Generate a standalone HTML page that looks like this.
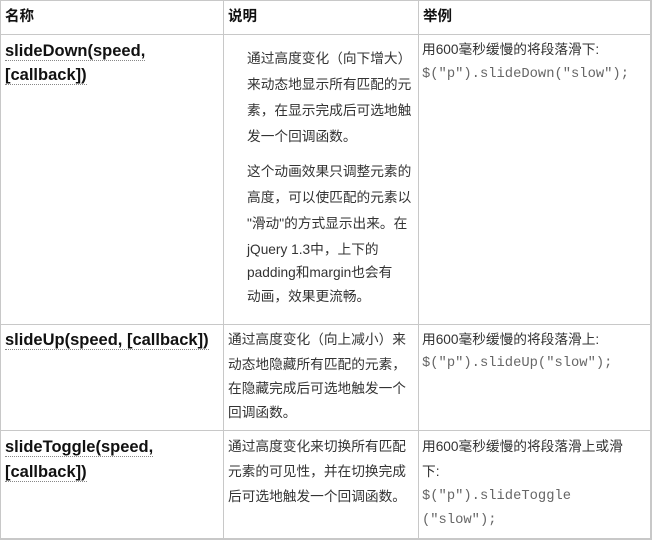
<!DOCTYPE html>
<html><head><meta charset="utf-8"><style>
body{margin:0;width:652px;height:540px;background:#fff;position:relative;overflow:hidden;font-family:"Liberation Sans","Noto Sans CJK SC",sans-serif;color:#333}
.h{position:absolute;background:#c8c8c8}
.t{position:absolute;white-space:nowrap;line-height:20px;font-size:13.7px}
.b{font-weight:bold;font-size:16.5px;color:#111}
.b span{border-bottom:1px dotted #888}
.c{font-family:"Liberation Mono",monospace;font-size:13.8px;color:#666}
.hd{font-weight:bold;font-size:14.5px;color:#111}
</style></head><body>
<div class="h" style="left:0;top:0;width:652px;height:1px"></div>
<div class="h" style="left:0;top:34px;width:652px;height:1px"></div>
<div class="h" style="left:0;top:324px;width:652px;height:1px"></div>
<div class="h" style="left:0;top:430px;width:652px;height:1px"></div>
<div class="h" style="left:0;top:538px;width:652px;height:2px"></div>
<div class="h" style="left:0;top:0;width:1px;height:540px"></div>
<div class="h" style="left:223px;top:0;width:1px;height:540px"></div>
<div class="h" style="left:418px;top:0;width:1px;height:540px"></div>
<div class="h" style="left:650px;top:0;width:2px;height:540px"></div>

<div class="t hd" style="left:5px;top:7px">名称</div>
<div class="t hd" style="left:228px;top:7px">说明</div>
<div class="t hd" style="left:423px;top:7px">举例</div>

<div class="t b" style="left:5px;top:41px"><span>slideDown(speed,</span></div>
<div class="t b" style="left:5px;top:65px"><span>[callback])</span></div>

<div class="t" style="left:247px;top:49px">通过高度变化（向下增大）</div>
<div class="t" style="left:247px;top:75px">来动态地显示所有匹配的元</div>
<div class="t" style="left:247px;top:101px">素，在显示完成后可选地触</div>
<div class="t" style="left:247px;top:127px">发一个回调函数。</div>
<div class="t" style="left:247px;top:162px">这个动画效果只调整元素的</div>
<div class="t" style="left:247px;top:188px">高度，可以使匹配的元素以</div>
<div class="t" style="left:247px;top:214px">"滑动"的方式显示出来。在</div>
<div class="t" style="left:247px;top:240px">jQuery 1.3中，上下的</div>
<div class="t" style="left:247px;top:263px">padding和margin也会有</div>
<div class="t" style="left:247px;top:287px">动画，效果更流畅。</div>

<div class="t" style="left:422px;top:40px">用600毫秒缓慢的将段落滑下:</div>
<div class="t c" style="left:422px;top:65px">$("p").slideDown("slow");</div>

<div class="t b" style="left:5px;top:330px"><span>slideUp(speed, [callback])</span></div>
<div class="t" style="left:228px;top:330px">通过高度变化（向上减小）来</div>
<div class="t" style="left:228px;top:355px">动态地隐藏所有匹配的元素，</div>
<div class="t" style="left:228px;top:379px">在隐藏完成后可选地触发一个</div>
<div class="t" style="left:228px;top:403px">回调函数。</div>
<div class="t" style="left:422px;top:330px">用600毫秒缓慢的将段落滑上:</div>
<div class="t c" style="left:422px;top:354px">$("p").slideUp("slow");</div>

<div class="t b" style="left:5px;top:437px"><span>slideToggle(speed,</span></div>
<div class="t b" style="left:5px;top:462px"><span>[callback])</span></div>
<div class="t" style="left:228px;top:437px">通过高度变化来切换所有匹配</div>
<div class="t" style="left:228px;top:462px">元素的可见性，并在切换完成</div>
<div class="t" style="left:228px;top:487px">后可选地触发一个回调函数。</div>
<div class="t" style="left:422px;top:437px">用600毫秒缓慢的将段落滑上或滑</div>
<div class="t" style="left:422px;top:462px">下:</div>
<div class="t c" style="left:422px;top:487px">$("p").slideToggle</div>
<div class="t c" style="left:422px;top:511px">("slow");</div>
</body></html>
